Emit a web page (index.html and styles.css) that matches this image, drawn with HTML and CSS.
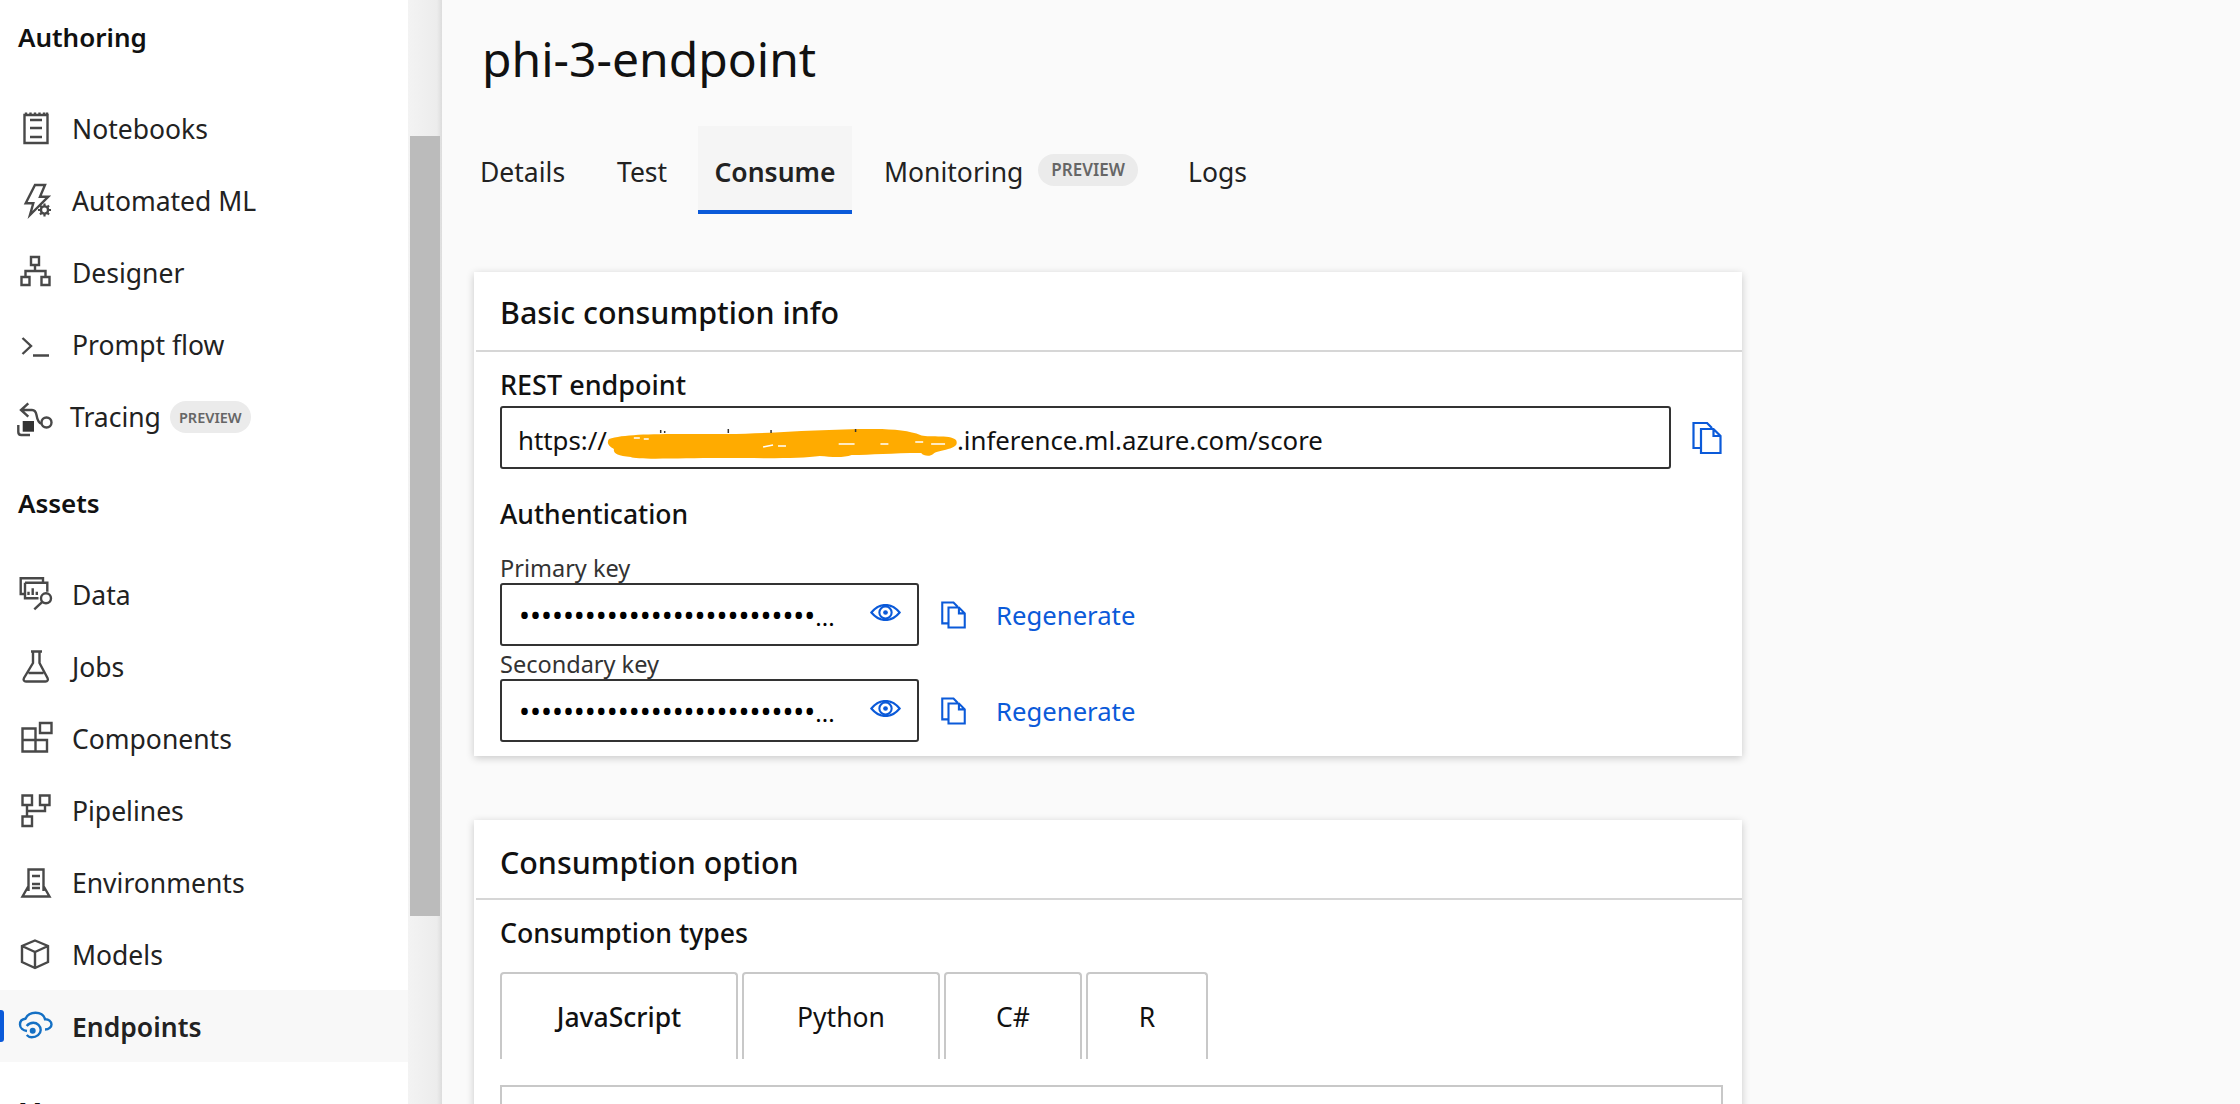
FILE: index.html
```html
<!DOCTYPE html>
<html lang="en">
<head>
    <meta charset="UTF-8">
    <title>phi-3-endpoint</title>
    <link rel="stylesheet" href="styles.css">
</head>
<body>
<div class="page">
    <nav class="sidebar">
        <h3 class="nav-heading">Authoring</h3>
        <a class="nav-item">
            <svg class="nav-icon" viewBox="0 0 36 36"><path d="M4.500 4h23v28h-23zM10 9h12M10 17h12M10 26h12"/><path d="M6 1.500v2M10.500 1.500v2M15 1.500v2M19.500 1.500v2M24 1.500v2M27 1.500v2"/></svg>
            <span>Notebooks</span>
        </a>
        <a class="nav-item">
            <svg class="nav-icon" viewBox="0 0 36 36"><path d="M15 2h10l-5 11.700h8.300L10 32l3.300-11.700H5.700z"/><circle cx="24.500" cy="27" r="3.600" stroke-width="2.400"/><path d="M24.500 20.500v2.500M24.500 31v2.500M18 27h2.500M28.500 27H31M20 22.500l1.600 1.600M27.400 29.900l1.600 1.600M20 31.500l1.600-1.600M27.400 24.100l1.600-1.600" stroke-width="2.200"/></svg>
            <span>Automated ML</span>
        </a>
        <a class="nav-item">
            <svg class="nav-icon" viewBox="0 0 36 36"><path d="M11 2h8v8h-8zM1.500 22h8v8h-8zM21.500 22h8v8h-8zM15 10v6M5.500 22v-6h20v6"/></svg>
            <span>Designer</span>
        </a>
        <a class="nav-item">
            <svg class="nav-icon" viewBox="0 0 36 36"><path d="M2.500 11l8.500 8-8.500 8M13 28.500h16"/></svg>
            <span>Prompt flow</span>
        </a>
        <a class="nav-item nav-item-tracing">
            <svg class="nav-icon" viewBox="0 0 36 36"><path d="M8.300 4.300L1 11l7.300 6.700M1 11h11c3 0 4 2 4.500 5s1.500 8 5 8.500"/><circle cx="26.500" cy="23.500" r="5"/><path class="solid" d="M2.700 22H14v10.700H2.700z"/><path d="M-1.700 26v7c0 2 1 3 3 3H10"/></svg>
            <span>Tracing</span>
            <span class="badge badge-small">PREVIEW</span>
        </a>
        <h3 class="nav-heading nav-heading-assets">Assets</h3>
        <a class="nav-item">
            <svg class="nav-icon" viewBox="0 0 36 36"><path d="M23 5.700V1.300H.7V17H5"/><path d="M5 5.700h22.300v9M5 5.700v15.600h13.500"/><path d="M8.500 18v-3.300M12.700 18v-6.700M16.800 18v-3.300"/><circle cx="26" cy="21.300" r="5"/><path d="M22.300 24.800l-8 7.500"/></svg>
            <span>Data</span>
        </a>
        <a class="nav-item">
            <svg class="nav-icon" viewBox="0 0 36 36"><path d="M11 2.500h11M13 2.500v11.500L4 29c-1 2 0 3.500 2 3.500h19.500c2 0 3-1.500 2-3.500L19.500 14V2.500M8.500 24h15"/></svg>
            <span>Jobs</span>
        </a>
        <a class="nav-item">
            <svg class="nav-icon" viewBox="0 0 36 36"><path d="M2.500 7.500h13v23h-13zM2.500 19h24.500v11.500H15.500M20 2h11.500v10H20z"/></svg>
            <span>Components</span>
        </a>
        <a class="nav-item">
            <svg class="nav-icon" viewBox="0 0 36 36"><path d="M2.500 2.500h9.500v9.500H2.500zM20 2.500h9.500v9.500H20zM2.500 23.500h9.500v9.500H2.500zM7 12v11.500M7 18h18V12"/></svg>
            <span>Pipelines</span>
        </a>
        <a class="nav-item">
            <svg class="nav-icon" viewBox="0 0 36 36"><path d="M8.500 26V4.500h15V26M12 11h8M12 19h8M12 23h8M8.500 21L2.500 31.500h27L23.500 21"/></svg>
            <span>Environments</span>
        </a>
        <a class="nav-item">
            <svg class="nav-icon" viewBox="0 0 36 36"><path d="M15 3.500l13 5.500v16l-13 6-13-6V9zM2 9l13 6 13-6M15 15v16"/></svg>
            <span>Models</span>
        </a>
        <a class="nav-item nav-item-active">
            <svg class="nav-icon" viewBox="0 0 36 36"><path d="M25 20.500c4 0 6.500-2.500 6.500-5 0-3-3-5.500-6.500-5.200C24 6 20 3.700 15.500 3.700c-4.500 0-8.500 2.500-10 6C2 10 0 12.500 0 15.500c0 3.500 3 6 7 6.500"/><path d="M6.700 17c1.500-2 4-3.300 6.600-3.300 4 0 7.400 3.300 7.400 7.300s-4 7.300-9 7.300c-2 0-3.500-.7-5-2.300"/><circle class="solid" cx="12.700" cy="21.700" r="3"/></svg>
            <span>Endpoints</span>
        </a>
        <h3 class="nav-heading nav-heading-manage">Manage</h3>
    </nav>

    <div class="scrollbar"><div class="scrollbar-thumb"></div></div>

    <main class="content">
        <h1 class="title">phi-3-endpoint</h1>

        <div class="tabs">
            <div class="tab tab-details">Details</div>
            <div class="tab tab-test">Test</div>
            <div class="tab tab-active">Consume</div>
            <div class="tab tab-monitoring">Monitoring <span class="badge">PREVIEW</span></div>
            <div class="tab">Logs</div>
        </div>

        <section class="card card-info">
            <h2 class="card-title">Basic consumption info</h2>
            <div class="card-body">
                <label class="field-label">REST endpoint</label>
                <div class="url-row">
                    <div class="input input-url"><span>https://</span><span class="scribble"><svg viewBox="0 0 352 30" preserveAspectRatio="none"><path d="M2 10C20 4 60 5 120 5c50-.5 90-5 150-5 18 0 36 2 45 6 6 3 30-1 36 5 2 4 0 7-8 9-6 2-12 2-15 5-3 3-10 2-12-1-30 0-50 2-70 2-8 3-20 2-32 1-20 3-60 2-100 2-40 0-85 2-90-1C10 27 6 24 7 20 0 16 0 13 2 10z"/><path class="speck" d="M27 9h6M37 10h5M157 18l10-2M172 17h8M233 15h16M275 15h8M310 13h8M326 15h14"/><path class="ink" d="M54 1v3M58 2v2M122 0v4M165 1v3M250 0v3"/></svg></span><span>.inference.ml.azure.com/score</span></div>
                    <svg class="copy-icon copy-icon-url" viewBox="0 0 30 32"><path d="M20 6l-5-5H1.500v25H9M9 7h12.500l7 7v17H9zM21.500 7v7h7"/></svg>
                </div>

                <h4 class="sub-heading">Authentication</h4>

                <label class="key-label">Primary key</label>
                <div class="key-row">
                    <div class="input input-key">
                        <span class="dots">•••••••••••••••••••••••••••<span class="dots-more">...</span></span>
                        <svg class="eye-icon" viewBox="0 0 32 18"><path d="M1 9c5-6 10-8 15-8s10 2 15 8c-5 6-10 8-15 8S6 15 1 9z"/><circle cx="16" cy="9" r="6.500"/><circle class="fill-blue" cx="16" cy="9" r="2.500"/></svg>
                    </div>
                    <svg class="copy-icon" viewBox="0 0 30 32"><path d="M20 6l-5-5H1.500v25H9M9 7h12.500l7 7v17H9zM21.500 7v7h7"/></svg>
                    <a class="link">Regenerate</a>
                </div>

                <label class="key-label">Secondary key</label>
                <div class="key-row">
                    <div class="input input-key">
                        <span class="dots">•••••••••••••••••••••••••••<span class="dots-more">...</span></span>
                        <svg class="eye-icon" viewBox="0 0 32 18"><path d="M1 9c5-6 10-8 15-8s10 2 15 8c-5 6-10 8-15 8S6 15 1 9z"/><circle cx="16" cy="9" r="6.500"/><circle class="fill-blue" cx="16" cy="9" r="2.500"/></svg>
                    </div>
                    <svg class="copy-icon" viewBox="0 0 30 32"><path d="M20 6l-5-5H1.500v25H9M9 7h12.500l7 7v17H9zM21.500 7v7h7"/></svg>
                    <a class="link">Regenerate</a>
                </div>
            </div>
        </section>

        <section class="card card-option">
            <h2 class="card-title">Consumption option</h2>
            <div class="card-body">
                <h4 class="sub-heading sub-heading-types">Consumption types</h4>
                <div class="lang-tabs">
                    <div class="lang-tab lang-js lang-active">JavaScript</div>
                    <div class="lang-tab lang-py">Python</div>
                    <div class="lang-tab lang-cs">C#</div>
                    <div class="lang-tab lang-r">R</div>
                </div>
                <div class="code-box"></div>
            </div>
        </section>
    </main>
</div>
</body>
</html>
```

FILE: styles.css
```css
/* General Styles */
html, body {
    margin: 0;
    padding: 0;
    height: 100%;
    overflow: hidden;
}

body {
    font-family: "Noto Sans", "Open Sans", sans-serif;
    color: #111;
    background-color: #fafafa;
}

.page {
    display: flex;
    height: 1104px;
    overflow: hidden;
}

/* Sidebar */
.sidebar {
    width: 408px;
    flex: none;
    background-color: #ffffff;
}

.nav-heading {
    margin: 0;
    padding: 18px 0 0 18px;
    height: 54px;
    box-sizing: border-box;
    font-size: 26px;
    line-height: 38px;
    font-weight: 600;
    color: #111;
}

.nav-heading-assets {
    margin-top: 13px;
}

.nav-heading-manage {
    margin-top: 12px;
}

.nav-item {
    display: flex;
    align-items: center;
    box-sizing: border-box;
    height: 72px;
    padding-left: 20px;
    font-size: 26.500px;
    color: #222;
}

.nav-heading + .nav-item {
    margin-top: 39px;
}

.nav-heading-assets + .nav-item {
    margin-top: 38px;
}

.nav-heading-assets ~ .nav-item {
    padding-top: 2px;
}

.nav-icon {
    width: 36px;
    height: 36px;
    flex: none;
    margin-right: 16px;
    overflow: visible;
    fill: none;
    stroke: #484848;
    stroke-width: 2.400;
}

.nav-icon .solid {
    fill: #333;
    stroke: none;
}

.nav-item-tracing .nav-icon {
    margin-right: 14px;
}

.nav-item-active {
    position: relative;
    background-color: #f8f8f8;
    font-weight: 600;
}

.nav-item-active::before {
    content: "";
    position: absolute;
    left: 0;
    top: 20px;
    width: 4px;
    height: 32px;
    border-radius: 0 3px 3px 0;
    background-color: #0b5ad9;
}

.nav-item-active .nav-icon {
    stroke: #1470c4;
}

.nav-item-active .nav-icon .solid {
    fill: #1470c4;
}

.badge {
    display: inline-block;
    margin-bottom: 5px;
    padding: 0 13px;
    border-radius: 16px;
    background-color: #ebebeb;
    color: #666;
    font-size: 17px;
    font-weight: 600;
    line-height: 32px;
}

.badge-small {
    margin: 0 0 0 9px;
    padding: 0 9px;
    font-size: 14.500px;
    line-height: 32px;
}

/* Scrollbar */
.scrollbar {
    width: 34px;
    flex: none;
    background: linear-gradient(to right, #f3f3f3, #ececec 85%, #dcdcdc);
}

.scrollbar-thumb {
    width: 30px;
    height: 780px;
    margin: 136px 0 0 2px;
    background-color: #bbbbbb;
}

/* Main */
.content {
    flex: 1;
    padding-left: 32px;
    min-width: 0;
}

.title {
    margin: 0;
    padding: 28px 0 0 8px;
    font-size: 48px;
    line-height: 62px;
    font-weight: 400;
    color: #111;
}

/* Tabs */
.tabs {
    display: flex;
    margin: 36px 0 58px 0;
    height: 88px;
}

.tab {
    display: flex;
    align-items: center;
    gap: 15px;
    box-sizing: border-box;
    padding-top: 4px;
    font-size: 26.500px;
    color: #222;
    white-space: nowrap;
}

.tab-details {
    width: 143px;
    padding-left: 6px;
}

.tab-test {
    width: 81px;
}

.tab-active {
    width: 154px;
    justify-content: center;
    padding-top: 8px;
    border-bottom: 4px solid #0b5ad9;
    background-color: #f5f5f5;
    font-weight: 600;
}

.tab-monitoring {
    width: 336px;
    padding-left: 32px;
}

/* Cards */
.card {
    width: 1268px;
    background-color: #ffffff;
    box-shadow: 0 2px 8px rgba(0, 0, 0, 0.2);
}

.card-info {
    height: 484px;
}

.card-option {
    margin-top: 64px;
    height: 300px;
}

.card-title {
    margin: 0 0 0 2px;
    padding: 5px 0 0 24px;
    height: 80px;
    box-sizing: border-box;
    border-bottom: 2px solid #d6d6d6;
    font-size: 30.400px;
    line-height: 72px;
    font-weight: 500;
    color: #111;
}

.card-option .card-title {
    padding-top: 7px;
}

.card-body {
    padding: 12px 19px 0 26px;
}

.field-label {
    display: block;
    font-size: 27px;
    line-height: 42px;
    font-weight: 500;
    color: #111;
}

.url-row {
    display: flex;
    align-items: center;
}

.input {
    display: flex;
    align-items: center;
    box-sizing: border-box;
    height: 63px;
    padding-left: 16px;
    border: 2px solid #333;
    border-radius: 3px;
    font-size: 25.800px;
    color: #111;
    white-space: pre;
}

.input-url {
    width: 1171px;
    padding-top: 5px;
}

.scribble {
    display: inline-block;
    width: 350px;
    height: 30px;
    margin-top: 8px;
}

.scribble svg {
    display: block;
    width: 100%;
    height: 100%;
    overflow: visible;
    fill: #ffab00;
}

.scribble .speck {
    fill: none;
    stroke: #fff;
    stroke-width: 1.500;
}

.scribble .ink {
    fill: none;
    stroke: #333;
    stroke-width: 1.500;
}

.copy-icon {
    flex: none;
    fill: none;
    stroke: #0b5ad9;
    stroke-width: 2.500;
    width: 25px;
    height: 28px;
    margin: 0 30px 0 22px;
}

.copy-icon-url {
    width: 30px;
    height: 32px;
    margin: 0 0 0 21px;
    stroke-width: 2.200;
}

.sub-heading {
    margin: 27px 0 0 0;
    font-size: 26.500px;
    line-height: 36px;
    font-weight: 500;
    color: #111;
}

.sub-heading-types {
    margin: 3px 0 0 0;
    font-size: 26.700px;
}

.key-label {
    display: block;
    margin-top: 21px;
    font-size: 23.500px;
    line-height: 30px;
    color: #333;
}

.key-label ~ .key-label {
    margin-top: 3px;
}

.key-row {
    display: flex;
    align-items: center;
}

.input-key {
    width: 419px;
    justify-content: space-between;
    padding-left: 17px;
    padding-right: 16px;
}

.dots {
    white-space: nowrap;
    font-size: 29.200px;
    color: #000;
}

.dots-more {
    font-size: 24px;
}

.eye-icon {
    width: 31px;
    height: 17px;
    margin-bottom: 5px;
    flex: none;
    fill: none;
    stroke: #0b5ad9;
    stroke-width: 2.200;
}

.eye-icon .fill-blue {
    fill: #0b5ad9;
    stroke: none;
}

.link {
    padding-top: 2px;
    font-size: 25.700px;
    color: #0b5ad9;
}

/* Language tabs */
.lang-tabs {
    display: flex;
    gap: 4px;
    margin-top: 21px;
}

.lang-tab {
    box-sizing: border-box;
    height: 87px;
    border: 2px solid #c8c8c8;
    border-bottom: none;
    border-radius: 4px 4px 0 0;
    font-size: 26.500px;
    line-height: 86px;
    text-align: center;
    color: #111;
}

.lang-active {
    font-weight: 500;
}

.lang-js { width: 238px; }
.lang-py { width: 198px; }
.lang-cs { width: 138px; }
.lang-r { width: 122px; }

.code-box {
    height: 60px;
    margin-top: 26px;
    border: 2px solid #c8c8c8;
    border-bottom: none;
}
```
